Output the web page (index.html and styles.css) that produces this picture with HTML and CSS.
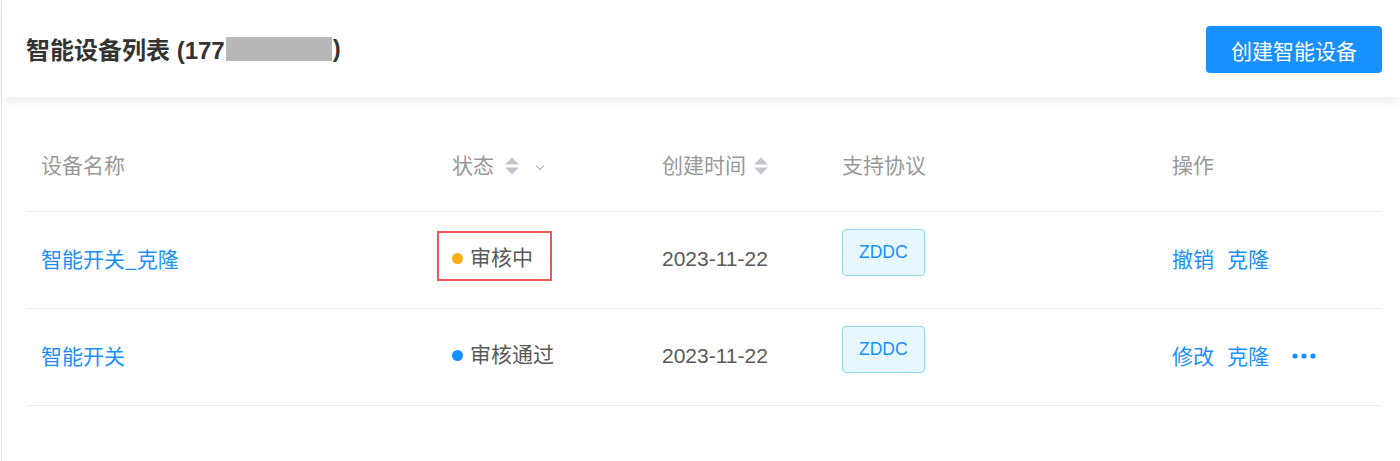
FILE: index.html
```html
<!DOCTYPE html>
<html lang="zh-CN">
<head>
<meta charset="utf-8">
<title>智能设备列表</title>
<link rel="stylesheet" href="styles.css">
</head>
<body>
<div class="page">
  <header class="topbar">
    <h1 class="title">智能设备列表 (177<span class="mask"></span>)</h1>
    <button class="btn-primary" type="button">创建智能设备</button>
  </header>

  <div class="table">
    <div class="row thead">
      <div class="cell">设备名称</div>
      <div class="cell">状态
        <svg class="sorter sorter-status" width="14" height="18" viewBox="0 0 14 18"><path d="M0 7.5 L7 0.5 L14 7.5 Z" fill="#c0c4cc"/><path d="M0 10.5 L14 10.5 L7 17.5 Z" fill="#c0c4cc"/></svg>
        <svg class="chevron" width="10" height="7" viewBox="0 0 10 7"><path d="M1 1.5 L5 5.5 L9 1.5" fill="none" stroke="#b8bcc4" stroke-width="1.2"/></svg>
      </div>
      <div class="cell">创建时间
        <svg class="sorter sorter-time" width="14" height="18" viewBox="0 0 14 18"><path d="M0 7.5 L7 0.5 L14 7.5 Z" fill="#c0c4cc"/><path d="M0 10.5 L14 10.5 L7 17.5 Z" fill="#c0c4cc"/></svg>
      </div>
      <div class="cell">支持协议</div>
      <div class="cell">操作</div>
    </div>

    <div class="row">
      <div class="cell"><a class="link">智能开关_克隆</a></div>
      <div class="cell"><span class="status status-marked"><i class="dot dot-warning"></i>审核中</span></div>
      <div class="cell text">2023-11-22</div>
      <div class="cell"><span class="tag">ZDDC</span></div>
      <div class="cell ops"><a class="link">撤销</a><a class="link">克隆</a></div>
    </div>

    <div class="row">
      <div class="cell"><a class="link">智能开关</a></div>
      <div class="cell"><span class="status"><i class="dot dot-primary"></i>审核通过</span></div>
      <div class="cell text">2023-11-22</div>
      <div class="cell"><span class="tag">ZDDC</span></div>
      <div class="cell ops"><a class="link">修改</a><a class="link">克隆</a>
        <svg class="more" width="24" height="6" viewBox="0 0 24 6"><circle cx="3" cy="3" r="2.6" fill="#1890ff"/><circle cx="12" cy="3" r="2.6" fill="#1890ff"/><circle cx="21" cy="3" r="2.6" fill="#1890ff"/></svg>
      </div>
    </div>
  </div>
</div>
</body>
</html>
```

FILE: styles.css
```css
* { box-sizing: border-box; }

html, body {
  margin: 0;
  padding: 0;
  background: #ffffff;
}

body {
  font-family: "Liberation Sans", "Noto Sans CJK SC", Arial, sans-serif;
  color: #595959;
}

.page {
  margin-left: 1px;
  border-left: 1px solid #e4e4e4;
  min-height: 461px;
}

.topbar {
  height: 97px;
  display: flex;
  align-items: center;
  justify-content: space-between;
  padding: 0 18px 0 24px;
  background: #ffffff;
  box-shadow: 0 4px 10px rgba(0, 0, 0, 0.07);
  position: relative;
  z-index: 1;
}

.title {
  margin: 0;
  font-size: 24px;
  font-weight: bold;
  color: #333333;
  display: flex;
  align-items: center;
  white-space: pre;
}

.mask {
  display: inline-block;
  width: 106px;
  height: 24px;
  background: #b7b7b7;
  margin-left: 1px;
  margin-right: 1px;
}

.btn-primary {
  height: 47px;
  width: 176px;
  border: none;
  border-radius: 4px;
  background: #1890ff;
  color: #ffffff;
  font-family: "Noto Sans CJK SC", sans-serif;
  font-size: 21px;
  padding: 0;
  margin-top: 2px;
}

.table {
  margin: 20px 0 0 24px;
  width: 1356px;
}

.row {
  display: grid;
  grid-template-columns: 411px 210px 180px 330px 225px;
  height: 97px;
  border-bottom: 1px solid #ebedf0;
  align-items: center;
}

.thead {
  height: 95px;
}

.cell {
  padding-left: 15px;
  font-size: 21px;
  display: flex;
  align-items: center;
  font-family: "Liberation Sans", "Noto Sans CJK SC", sans-serif;
}

.row:not(.thead) .cell {
  padding-bottom: 4px;
}

.thead .cell {
  color: #999999;
  font-family: "Noto Sans CJK SC", sans-serif;
  line-height: 1;
}

.sorter { margin-top: 4px; }
.sorter-status { margin-left: 11px; }
.sorter-time { margin-left: 8px; }
.chevron { margin-left: 16px; margin-top: 7px; }

.link {
  color: #1890ff;
  font-family: "Noto Sans CJK SC", sans-serif;
  text-decoration: none;
  cursor: pointer;
}

.text {
  color: #595959;
  padding-top: 1px;
}

.status {
  display: inline-flex;
  align-items: center;
  height: 50px;
  border: 2px solid transparent;
  padding: 0 17px 0 13px;
  margin-left: -15px;
  color: #595959;
  font-family: "Noto Sans CJK SC", sans-serif;
  margin-top: -4px;
}

.row .cell .status-marked {
  border-color: #f05454;
}

.dot {
  display: inline-block;
  width: 11px;
  height: 11px;
  border-radius: 50%;
  margin-right: 7px;
  margin-top: 4px;
}

.dot-warning { background: #faad14; }
.dot-primary { background: #1890ff; }

.tag {
  display: inline-block;
  height: 47px;
  line-height: 45px;
  padding: 0 16px;
  border: 1px solid #91d5ff;
  border-radius: 4px;
  background: #e6f7ff;
  color: #1890ff;
  font-size: 17.5px;
  margin-bottom: 12px;
}

.ops .link + .link { margin-left: 13px; }
.more { margin-left: 23px; margin-top: 2px; }
```
